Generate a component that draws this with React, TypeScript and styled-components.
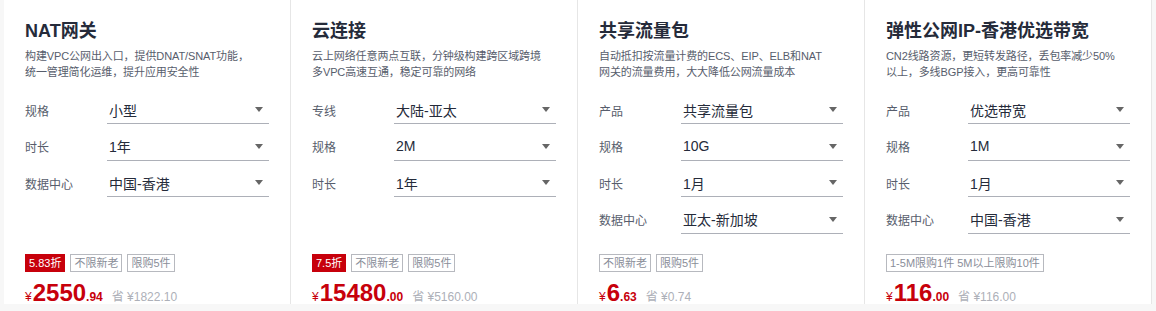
import styled, { createGlobalStyle } from "styled-components";

type Field = { label: string; value: string };

type Product = {
  title: string;
  desc: string[];
  fields: Field[];
  discount?: string;
  tags: string[];
  price: string;
  cents: string;
  saved: string;
};

const products: Product[] = [
  {
    title: "NAT网关",
    desc: ["构建VPC公网出入口，提供DNAT/SNAT功能，", "统一管理简化运维，提升应用安全性"],
    fields: [
      { label: "规格", value: "小型" },
      { label: "时长", value: "1年" },
      { label: "数据中心", value: "中国-香港" },
    ],
    discount: "5.83折",
    tags: ["不限新老", "限购5件"],
    price: "2550",
    cents: ".94",
    saved: "省 ¥1822.10",
  },
  {
    title: "云连接",
    desc: ["云上网络任意两点互联，分钟级构建跨区域跨境", "多VPC高速互通，稳定可靠的网络"],
    fields: [
      { label: "专线", value: "大陆-亚太" },
      { label: "规格", value: "2M" },
      { label: "时长", value: "1年" },
    ],
    discount: "7.5折",
    tags: ["不限新老", "限购5件"],
    price: "15480",
    cents: ".00",
    saved: "省 ¥5160.00",
  },
  {
    title: "共享流量包",
    desc: ["自动抵扣按流量计费的ECS、EIP、ELB和NAT", "网关的流量费用，大大降低公网流量成本"],
    fields: [
      { label: "产品", value: "共享流量包" },
      { label: "规格", value: "10G" },
      { label: "时长", value: "1月" },
      { label: "数据中心", value: "亚太-新加坡" },
    ],
    tags: ["不限新老", "限购5件"],
    price: "6",
    cents: ".63",
    saved: "省 ¥0.74",
  },
  {
    title: "弹性公网IP-香港优选带宽",
    desc: ["CN2线路资源，更短转发路径，丢包率减少50%", "以上，多线BGP接入，更高可靠性"],
    fields: [
      { label: "产品", value: "优选带宽" },
      { label: "规格", value: "1M" },
      { label: "时长", value: "1月" },
      { label: "数据中心", value: "中国-香港" },
    ],
    tags: ["1-5M限购1件 5M以上限购10件"],
    price: "116",
    cents: ".00",
    saved: "省 ¥116.00",
  },
];

export default function App() {
  return (
    <>
      <GlobalStyle />
      <Board>
        {products.map((p) => (
          <Card key={p.title}>
            <Title>{p.title}</Title>
            <Desc>
              {p.desc.map((line) => (
                <div key={line}>{line}</div>
              ))}
            </Desc>
            <Form>
              {p.fields.map((f) => (
                <Row key={f.label}>
                  <Label>{f.label}</Label>
                  <Select>
                    <span>{f.value}</span>
                    <Caret />
                  </Select>
                </Row>
              ))}
            </Form>
            <Tags>
              {p.discount ? <Tag $hot>{p.discount}</Tag> : null}
              {p.tags.map((t) => (
                <Tag key={t}>{t}</Tag>
              ))}
            </Tags>
            <PriceLine>
              <Price>
                <small>¥</small>
                {p.price}
                <small>{p.cents}</small>
              </Price>
              <Saved>{p.saved}</Saved>
            </PriceLine>
          </Card>
        ))}
      </Board>
    </>
  );
}

const GlobalStyle = createGlobalStyle`
  body {
    margin: 0;
    background: #f7f7f7;
    font-family: "Liberation Sans", "Noto Sans CJK SC", sans-serif;
  }
`;

const Board = styled.div`
  display: grid;
  grid-template-columns: repeat(4, 287px);
  padding-left: 4px;
`;

const Card = styled.div`
  display: flex;
  flex-direction: column;
  height: 304px;
  box-sizing: border-box;
  padding: 19px 21px 0 21px;
  background: #fff;
  border-right: 1px solid #e6e6e6;
`;

const Title = styled.div`
  font-size: 18px;
  font-weight: bold;
  line-height: 24px;
  color: #252b3a;
  white-space: nowrap;
`;

const Desc = styled.div`
  margin-top: 5px;
  font-size: 11px;
  letter-spacing: -0.1px;
  line-height: 16px;
  color: #575d6c;
  white-space: nowrap;
`;

const Form = styled.div`
  margin-top: 16px;
  display: flex;
  flex-direction: column;
  gap: 8.5px;
`;

const Row = styled.div`
  display: flex;
  align-items: center;
`;

const Label = styled.div`
  width: 82px;
  font-size: 12px;
  color: #575d6c;
`;

const Select = styled.div`
  flex: 1;
  height: 28px;
  box-sizing: border-box;
  display: flex;
  align-items: center;
  justify-content: space-between;
  padding: 0 6px 0 2px;
  border-bottom: 1px solid #adb0b8;
  font-size: 14px;
  color: #252b3a;
`;

const Caret = styled.i`
  width: 0;
  height: 0;
  border-left: 4px solid transparent;
  border-right: 4px solid transparent;
  border-top: 5px solid #666;
`;

const Tags = styled.div`
  margin-top: auto;
  display: flex;
  gap: 5px;
`;

const Tag = styled.span<{ $hot?: boolean }>`
  height: 18px;
  box-sizing: border-box;
  padding: 0 3px;
  font-size: 11px;
  line-height: 16px;
  white-space: nowrap;
  border: 1px solid ${(p) => (p.$hot ? "#c7000b" : "#b7b9bf")};
  background: ${(p) => (p.$hot ? "#c7000b" : "#fff")};
  color: ${(p) => (p.$hot ? "#fff" : "#8a8e99")};
`;

const PriceLine = styled.div`
  display: flex;
  align-items: baseline;
  gap: 9px;
  height: 26px;
  margin-top: 6px;
`;

const Price = styled.div`
  font-size: 24px;
  font-weight: bold;
  line-height: 30px;
  color: #c7000b;

  small {
    font-size: 12px;
  }
  small:first-child {
    font-weight: normal;
    margin-right: 1px;
  }
`;

const Saved = styled.span`
  font-size: 12px;
  color: #adb0b8;
`;
